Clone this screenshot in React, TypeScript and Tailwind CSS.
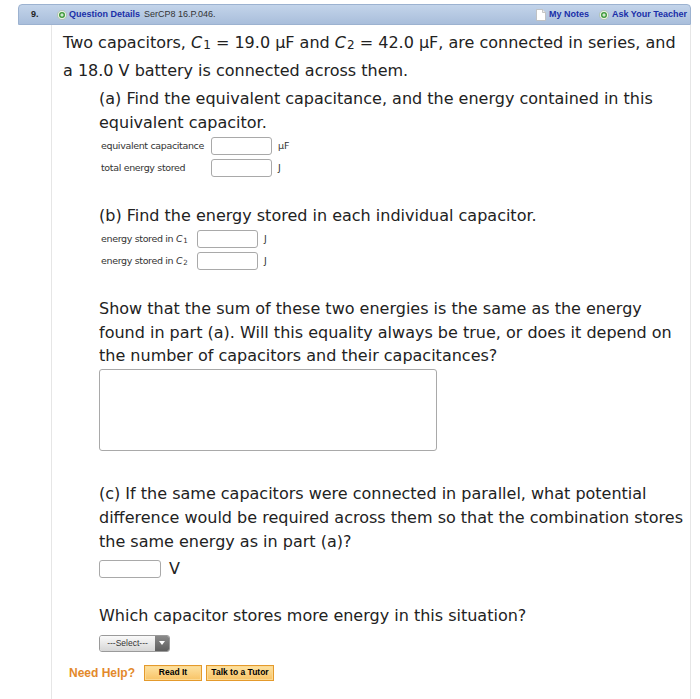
import type { FunctionComponent, ReactNode } from 'react';

const PlusDot: FunctionComponent = () => (
    <svg width="10" height="10" viewBox="0 0 10 10" className="shrink-0">
        <circle cx="5" cy="5" r="4.6" fill="#e8efe6" stroke="#9fb59a" strokeWidth="0.6"/>
        <circle cx="5" cy="5" r="3" fill="#3f9a3a"/>
        <path d="M5 3.3v3.4M3.3 5h3.4" stroke="#fff" strokeWidth="1"/>
    </svg>
);

const NoteIcon: FunctionComponent = () => (
    <svg width="10" height="12" viewBox="0 0 10 12" className="shrink-0">
        <path d="M0.5 0.5h6l3 3v8h-9z" fill="#fff" stroke="#b9b9b9" strokeWidth="0.8"/>
        <path d="M6.5 0.5v3h3" fill="#eee" stroke="#b9b9b9" strokeWidth="0.8"/>
    </svg>
);

const Cap: FunctionComponent<{ n: number }> = ({ n }) => (
    <span className="whitespace-nowrap">
        <i className="pr-[1px]">C</i>
        <sub className="text-[0.75em] leading-none relative -bottom-[0.1em]">{n}</sub>
    </span>
);

const Box: FunctionComponent<{ w?: string }> = ({ w = 'w-[61px]' }) => (
    <span className={`inline-block ${w} h-[18px] border border-[#a9a9a9] rounded-[3px] bg-white align-middle shrink-0`}/>
);

const Row: FunctionComponent<{ label: ReactNode; unit: string; labelW: string }> = ({ label, unit, labelW }) => (
    <div className="flex items-center h-[22px] text-[9.5px] text-[#333]">
        <span className={`${labelW} shrink-0 pl-[2px] whitespace-nowrap tracking-[-0.35px]`}>{label}</span>
        <Box w="w-[61px]"/>
        <span className="ml-[6px]">{unit}</span>
    </div>
);

const OrangeButton: FunctionComponent<{ label: string; w: string }> = ({ label, w }) => (
    <span
        className={`${w} h-[16px] flex items-center justify-center border border-[#e49a2c] bg-gradient-to-b from-[#fde2a0] to-[#f8c365] text-[8.5px] font-bold text-black shadow-[inset_0_0_0_1px_#fbd993]`}
        style={{ fontFamily: '"Liberation Sans", Arial, sans-serif' }}
    >
        {label}
    </span>
);

export default function App() {
    return (
        <div className="w-[700px] h-[699px] bg-white overflow-hidden text-[#222]" style={{ fontFamily: '"DejaVu Sans", Verdana, sans-serif' }}>
            {/* question header bar */}
            <div
                className="ml-[18px] mt-[4px] w-[673px] h-[21px] flex items-center rounded-t-[4px] border border-[#9cb2d0] bg-gradient-to-b from-[#c3d4ea] to-[#a9bedb] text-[9px]"
                style={{ fontFamily: '"Liberation Sans", Arial, sans-serif' }}
            >
                <span className="ml-[12px] w-[26px] font-bold text-[#222]">9.</span>
                <PlusDot/>
                <span className="ml-[2px] font-bold text-[#1a2fa8]">Question Details</span>
                <span className="ml-[4px] text-[#333]">SerCP8 16.P.046.</span>
                <span className="ml-auto flex items-center">
                    <NoteIcon/>
                    <span className="ml-[3px] font-bold text-[#1a2fa8]">My Notes</span>
                    <span className="ml-[10px]"><PlusDot/></span>
                    <span className="ml-[3px] mr-[3px] font-bold text-[#1a2fa8]">Ask Your Teacher</span>
                </span>
            </div>

            <div className="ml-[51px] w-[640px] h-[700px] border-l border-r border-[#e6e6e6] pl-[11px]">
                <p className="pt-[4px] text-[16px] leading-[28px] w-[620px]">
                    Two capacitors, <Cap n={1}/> = 19.0 μF and <Cap n={2}/> = 42.0 μF, are connected in series, and a 18.0 V battery is connected across them.
                </p>

                <div className="pl-[36px] mt-[2px]">
                    <p className="text-[16px] leading-[24px] w-[570px]">
                        (a) Find the equivalent capacitance, and the energy contained in this equivalent capacitor.
                    </p>
                    <Row label="equivalent capacitance" unit="μF" labelW="w-[112px]"/>
                    <Row label="total energy stored" unit="J" labelW="w-[112px]"/>

                    <p className="mt-[25px] text-[16px] leading-[24px]">
                        (b) Find the energy stored in each individual capacitor.
                    </p>
                    <Row label={<>energy stored in <Cap n={1}/></>} unit="J" labelW="w-[98px]"/>
                    <Row label={<>energy stored in <Cap n={2}/></>} unit="J" labelW="w-[98px]"/>

                    <p className="mt-[25px] text-[16px] leading-[23.5px] w-[580px]">
                        Show that the sum of these two energies is the same as the energy found in part (a). Will this equality always be true, or does it depend on the number of capacitors and their capacitances?
                    </p>
                    <div className="mt-[1px] w-[338px] h-[82px] border border-[#a9a9a9] rounded-[3px]"/>

                    <p className="mt-[31px] text-[16px] leading-[24px] w-[585px]">
                        (c) If the same capacitors were connected in parallel, what potential difference would be required across them so that the combination stores the same energy as in part (a)?
                    </p>
                    <div className="mt-[6px] flex items-center h-[18px]">
                        <Box w="w-[62px]"/>
                        <span className="ml-[8px] text-[16px]">V</span>
                    </div>

                    <p className="mt-[26px] text-[16px] leading-[24px]">
                        Which capacitor stores more energy in this situation?
                    </p>
                    <div
                        className="mt-[7px] w-[71px] h-[17px] flex rounded-[3px] border border-[#9a9a9a] overflow-hidden text-[8.5px] text-[#333]"
                        style={{ fontFamily: '"Liberation Sans", Arial, sans-serif' }}
                    >
                        <span className="flex-1 flex items-center justify-center bg-gradient-to-b from-[#fafafa] to-[#d6d6d6]">---Select---</span>
                        <span className="w-[14px] flex items-center justify-center bg-gradient-to-b from-[#8a8a8a] to-[#5e5e5e]">
                            <svg width="6" height="5" viewBox="0 0 6 5"><path d="M0 0h6L3 4z" fill="#fff"/></svg>
                        </span>
                    </div>
                </div>

                <div className="mt-[12px] ml-[6px] flex items-center">
                    <span className="text-[12px] font-bold text-[#e3892b] mr-[9px]" style={{ fontFamily: '"Liberation Sans", Arial, sans-serif' }}>
                        Need Help?
                    </span>
                    <OrangeButton label="Read It" w="w-[58px]"/>
                    <span className="w-[4px]"/>
                    <OrangeButton label="Talk to a Tutor" w="w-[68px]"/>
                </div>
            </div>
        </div>
    );
}
